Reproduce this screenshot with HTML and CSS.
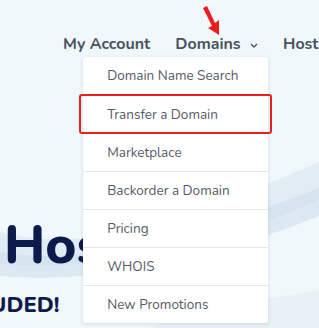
FILE: index.html
```html
<!DOCTYPE html>
<html>
<head>
    <title>Domains</title>
    <link rel="stylesheet" href="styles.css">
</head>
<body>
    <div class="page">
        <svg class="waves" width="319" height="328" viewBox="0 0 319 328">
            <path d="M0 232 C80 252 160 232 319 162 L319 200 C200 252 100 272 0 264 Z" fill="#dde9f2" opacity="0.8"/>
            <path d="M0 252 C90 266 180 242 319 188 L319 216 C200 264 90 284 0 276 Z" fill="#cfe0ec" opacity="0.6"/>
            <path d="M150 328 C220 300 270 300 319 290 L319 328 Z" fill="#e8f1f6"/>
        </svg>

        <nav class="nav">
            <a class="nav-item">My Account</a>
            <div class="nav-item dropdown">
                <a>Domains
                    <svg class="chev" width="8" height="5" viewBox="0 0 8 5">
                        <path d="M1 1 L4 4 L7 1" fill="none" stroke="#4a5260" stroke-width="1.3"/>
                    </svg>
                </a>
                <ul class="menu">
                    <li>Domain Name Search</li>
                    <li class="marked">Transfer a Domain</li>
                    <li>Marketplace</li>
                    <li>Backorder a Domain</li>
                    <li>Pricing</li>
                    <li>WHOIS</li>
                    <li>New Promotions</li>
                </ul>
            </div>
            <a class="nav-item">Hosting</a>
        </nav>

        <div class="hero">
            <h1>Hosting</h1>
            <p>INCLUDED!</p>
        </div>

        <svg class="arrow" width="24" height="34" viewBox="0 0 24 34">
            <path d="M3 4 L7 2 L15 19 L19 16 L19 31 L8 24 L12 22 Z" fill="#ee1c1c"/>
        </svg>
    </div>
</body>
</html>
```
FILE: styles.css
```css
body {
    margin: 0;
    padding: 0;
    font-family: 'Nunito', 'Lato', sans-serif;
    background-color: #f1f8fb;
    overflow: hidden;
}

.page {
    position: relative;
    width: 319px;
    height: 328px;
    overflow: hidden;
}

.waves {
    position: absolute;
    left: 0;
    top: 0;
}

.nav {
    position: relative;
    display: flex;
    gap: 25px;
    padding: 33px 0 0 63px;
    white-space: nowrap;
    font-size: 16px;
    font-weight: 700;
    color: #4a5260;
}

.nav-item {
    display: block;
    line-height: 22px;
}

.chev {
    margin-left: 5px;
    vertical-align: middle;
}

.dropdown {
    position: relative;
}

.menu {
    position: absolute;
    top: 24px;
    left: -92px;
    width: 185px;
    margin: 0;
    padding: 0;
    list-style: none;
    background-color: white;
    box-shadow: 0 1px 4px rgba(0, 0, 0, 0.12);
    border-radius: 3px;
    z-index: 2;
}

.menu li {
    height: 38px;
    line-height: 38px;
    padding-left: 24px;
    font-size: 13.5px;
    font-weight: 400;
    color: #555a66;
    border-top: 1px solid #e4e6ea;
    box-sizing: border-box;
}

.menu li:first-child {
    border-top: none;
}

.menu li.marked {
    outline: 2px solid #e8201f;
    outline-offset: -1px;
    border-radius: 2px;
    margin: 0 -3px;
    padding-left: 27px;
    position: relative;
}

.hero {
    position: relative;
    margin-top: 163px;
    color: #0d1b4c;
}

.hero h1 {
    margin: 0 0 0 4px;
    font-size: 53px;
    line-height: 56px;
    font-weight: 800;
}

.hero p {
    margin: 16px 0 0 -60px;
    font-size: 22px;
    font-weight: 800;
}

.arrow {
    position: absolute;
    left: 200px;
    top: 4px;
}
```
